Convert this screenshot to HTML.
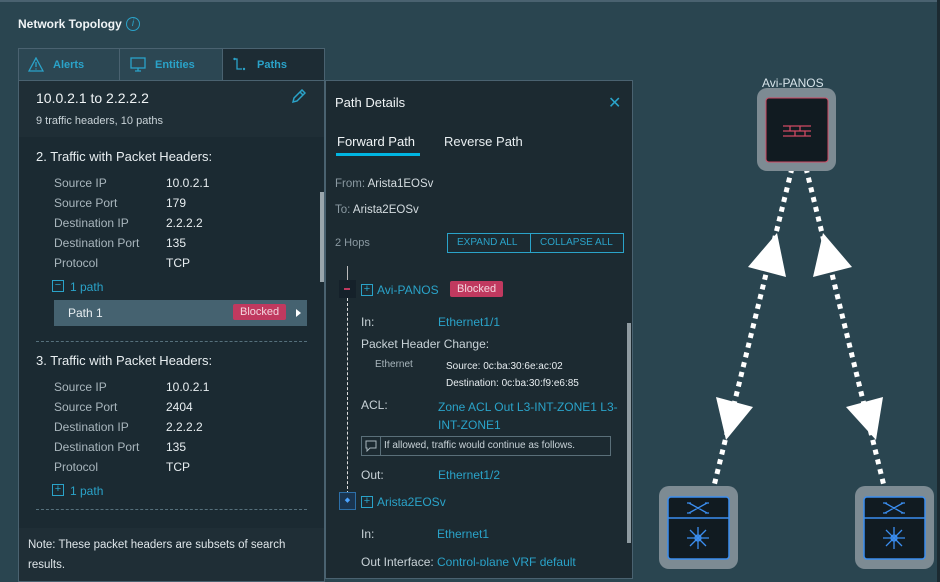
<!DOCTYPE html>
<html><head><meta charset="utf-8"><style>
*{margin:0;padding:0;box-sizing:border-box}
body{width:940px;height:582px;overflow:hidden;background:#2a4550;font-family:"Liberation Sans",sans-serif;position:relative;color:#e6ecef}
.a{position:absolute}
.lbl{color:#a9b6bd;font-size:12px}
.val{color:#e8eef1;font-size:12px}
.link{color:#2aa3c9;font-size:12px}
.blk{background:#c0395f;color:#f3d6df;font-size:11px;padding:2px 7px;border-radius:2px}
.pl{width:12px;height:12px;border:1px solid #2aa3c9;color:#2aa3c9;font-size:11px;line-height:9px;text-align:center}
</style></head><body>
<div class="a" style="left:0;top:0;width:940px;height:2px;background:#4a6270"></div>
<div class="a" style="left:937px;top:0;width:3px;height:582px;background:#1c2a31"></div>
<div class="a" style="left:18px;top:17px;font-size:12px;color:#f0f4f6;font-weight:bold">Network Topology</div>
<div class="a" style="left:126px;top:17px;width:14px;height:14px;border:1px solid #2aa3c9;border-radius:50%;color:#2aa3c9;font-size:10px;text-align:center;line-height:12px;font-style:italic">i</div>

<!-- left panel -->
<div class="a" style="left:18px;top:48px;width:307px;height:534px;background:#1b2a32;border:1px solid #4a6270"></div>
<div class="a" style="left:18px;top:48px;width:307px;height:33px;background:#2c4753;border:1px solid #4a6270"></div>
<div class="a" style="left:119px;top:48px;width:1px;height:33px;background:#4a6270"></div>
<div class="a" style="left:222px;top:48px;width:103px;height:33px;background:#1d2c34;border:1px solid #4a6270"></div>
<svg class="a" style="left:28px;top:57px" width="16" height="15"><path d="M8 1L15 14H1Z" fill="none" stroke="#2aa3c9" stroke-width="1.3"/><path d="M8 5v5M8 11.5v1" stroke="#2aa3c9" stroke-width="1.3"/></svg>
<div class="a" style="left:53px;top:59px;font-size:11px;color:#2aa3c9;font-weight:bold">Alerts</div>
<svg class="a" style="left:130px;top:57px" width="16" height="15"><rect x="1" y="1" width="14" height="10" fill="none" stroke="#2aa3c9" stroke-width="1.3"/><path d="M8 11v3M5 14h6" stroke="#2aa3c9" stroke-width="1.3"/></svg>
<div class="a" style="left:155px;top:59px;font-size:11px;color:#2aa3c9;font-weight:bold">Entities</div>
<svg class="a" style="left:233px;top:57px" width="14" height="14"><path d="M1 2h3v10h5" fill="none" stroke="#2aa3c9" stroke-width="1.3"/><circle cx="1.5" cy="2" r="1.2" fill="#2aa3c9"/><circle cx="11" cy="12" r="1.2" fill="#2aa3c9"/></svg>
<div class="a" style="left:257px;top:59px;font-size:11px;color:#2aa3c9;font-weight:bold">Paths</div>

<div class="a" style="left:19px;top:81px;width:305px;height:56px;background:#1f2e36"></div>
<div class="a" style="left:36px;top:90px;font-size:14px;color:#f0f4f6">10.0.2.1 to 2.2.2.2</div>
<svg class="a" style="left:290px;top:89px" width="16" height="16"><path d="M3 13l1-4 8-8 3 3-8 8z M10 3l3 3" fill="none" stroke="#2aa3c9" stroke-width="1.5"/></svg>
<div class="a" style="left:36px;top:115px;font-size:11px;color:#c9d3d8">9 traffic headers, 10 paths</div>

<div class="a" style="left:320px;top:192px;width:4px;height:90px;background:#9aa6ac"></div>

<div class="a" style="left:36px;top:149px;font-size:13px;color:#e8eef1">2. Traffic with Packet Headers:</div>
<div class="a lbl" style="left:54px;top:173px;line-height:20px">Source IP<br>Source Port<br>Destination IP<br>Destination Port<br>Protocol</div>
<div class="a val" style="left:166px;top:173px;line-height:20px">10.0.2.1<br>179<br>2.2.2.2<br>135<br>TCP</div>
<div class="a pl" style="left:52px;top:280px">−</div>
<div class="a link" style="left:70px;top:280px">1 path</div>
<div class="a" style="left:54px;top:300px;width:253px;height:26px;background:#456270"></div>
<div class="a val" style="left:68px;top:306px">Path 1</div>
<div class="a blk" style="left:233px;top:304px">Blocked</div>
<div class="a" style="left:296px;top:309px;width:0;height:0;border-left:5px solid #fff;border-top:4px solid transparent;border-bottom:4px solid transparent"></div>
<div class="a" style="left:36px;top:341px;width:271px;border-top:1px dashed #56707c"></div>

<div class="a" style="left:36px;top:353px;font-size:13px;color:#e8eef1">3. Traffic with Packet Headers:</div>
<div class="a lbl" style="left:54px;top:377px;line-height:20px">Source IP<br>Source Port<br>Destination IP<br>Destination Port<br>Protocol</div>
<div class="a val" style="left:166px;top:377px;line-height:20px">10.0.2.1<br>2404<br>2.2.2.2<br>135<br>TCP</div>
<div class="a pl" style="left:52px;top:484px">+</div>
<div class="a link" style="left:70px;top:484px">1 path</div>
<div class="a" style="left:36px;top:509px;width:271px;border-top:1px dashed #56707c"></div>
<div class="a" style="left:19px;top:528px;width:305px;height:53px;background:#1f2e36"></div>
<div class="a" style="left:28px;top:535px;font-size:11.5px;color:#dfe6ea;line-height:20px;width:290px">Note: These packet headers are subsets of search results.</div>

<!-- path details -->
<div class="a" style="left:325px;top:80px;width:308px;height:499px;background:#1c2a31;border:1px solid #4a6270"></div>
<div class="a" style="left:335px;top:95px;font-size:13px;color:#f0f4f6">Path Details</div>
<div class="a" style="left:608px;top:93px;font-size:16px;color:#2aa3c9">✕</div>
<div class="a" style="left:337px;top:134px;font-size:13px;color:#f0f4f6">Forward Path</div>
<div class="a" style="left:336px;top:153px;width:84px;height:3px;background:#00b5e2"></div>
<div class="a" style="left:444px;top:134px;font-size:13px;color:#e8eef1">Reverse Path</div>
<div class="a" style="left:335px;top:178px;font-size:11.5px;color:#8b9aa2">From: <span style="color:#d5dde1">Arista1EOSv</span></div>
<div class="a" style="left:335px;top:204px;font-size:11.5px;color:#8b9aa2">To: <span style="color:#d5dde1">Arista2EOSv</span></div>
<div class="a" style="left:335px;top:237px;font-size:11px;color:#8b9aa2">2 Hops</div>
<div class="a" style="left:447px;top:233px;width:177px;height:20px;border:1px solid #2aa3c9"></div>
<div class="a" style="left:530px;top:233px;width:1px;height:20px;background:#2aa3c9"></div>
<div class="a" style="left:457px;top:237px;font-size:10px;color:#2aa3c9">EXPAND ALL</div>
<div class="a" style="left:540px;top:237px;font-size:10px;color:#2aa3c9">COLLAPSE ALL</div>
<div class="a" style="left:627px;top:323px;width:4px;height:220px;background:#8f9ba1"></div>

<div class="a" style="left:347px;top:266px;width:1px;height:14px;background:#bbb"></div>
<div class="a" style="left:347px;top:298px;height:196px;border-left:1px dashed #ddd"></div>
<div class="a" style="left:339px;top:280px;width:17px;height:18px;background:#15212a"></div>
<div class="a" style="left:344px;top:288px;width:6px;height:2px;background:#c0395f"></div>
<div class="a pl" style="left:361px;top:284px">+</div>
<div class="a link" style="left:377px;top:283px;font-size:12px">Avi-PANOS</div>
<div class="a blk" style="left:450px;top:281px">Blocked</div>
<div class="a lbl" style="left:361px;top:315px;color:#c9d3d8">In:</div>
<div class="a link" style="left:438px;top:315px">Ethernet1/1</div>
<div class="a" style="left:361px;top:337px;font-size:12px;color:#c9d3d8">Packet Header Change:</div>
<div class="a" style="left:375px;top:359px;font-size:10px;color:#a9b6bd">Ethernet</div>
<div class="a" style="left:446px;top:358px;font-size:10px;color:#e8eef1;line-height:17px">Source: 0c:ba:30:6e:ac:02<br>Destination: 0c:ba:30:f9:e6:85</div>
<div class="a lbl" style="left:361px;top:398px;color:#c9d3d8">ACL:</div>
<div class="a link" style="left:438px;top:398px;line-height:18px;width:180px">Zone ACL Out L3-INT-ZONE1 L3-INT-ZONE1</div>
<div class="a" style="left:361px;top:436px;width:250px;height:20px;border:1px solid #5a6f79"></div>
<div class="a" style="left:380px;top:436px;width:1px;height:20px;background:#5a6f79"></div>
<svg class="a" style="left:365px;top:440px" width="12" height="12"><path d="M1 1h10v7H5l-3 3V8H1z" fill="none" stroke="#a9b6bd"/></svg>
<div class="a" style="left:384px;top:440px;font-size:10px;color:#c9d3d8">If allowed, traffic would continue as follows.</div>
<div class="a lbl" style="left:361px;top:468px;color:#c9d3d8">Out:</div>
<div class="a link" style="left:438px;top:468px">Ethernet1/2</div>
<div class="a" style="left:339px;top:492px;width:17px;height:18px;background:#1a3550;border:1px solid #2d6fa8"></div>
<div class="a" style="left:343px;top:498px;width:9px;height:6px;color:#4aa3ff;font-size:7px;line-height:6px;text-align:center">◆</div>
<div class="a pl" style="left:361px;top:496px">+</div>
<div class="a link" style="left:377px;top:495px;font-size:12px">Arista2EOSv</div>
<div class="a lbl" style="left:361px;top:527px;color:#c9d3d8">In:</div>
<div class="a link" style="left:437px;top:527px">Ethernet1</div>
<div class="a" style="left:326px;top:550px;width:300px;height:16px;overflow:hidden"><div style="position:absolute;left:35px;top:5px;font-size:12px;color:#c9d3d8">Out Interface:</div><div style="position:absolute;left:111px;top:5px;font-size:12px;color:#2aa3c9">Control-plane VRF default</div></div>

<!-- topology -->
<div class="a" style="left:762px;top:76px;font-size:12px;color:#d7e4ea">Avi-PANOS</div>
<svg class="a" style="left:634px;top:0" width="303" height="582" viewBox="634 0 303 582">
<g stroke="#fff" stroke-width="5" stroke-dasharray="5 5" fill="none">
<path d="M792 168L713 490"/><path d="M806 168L885 490"/>
</g>
<g fill="#fff">
<path d="M777 233L748 267L786 277Z"/><path d="M823 233L813 277L852 267Z"/>
<path d="M716 397L753 407L726 440Z"/><path d="M846 407L883 397L876 440Z"/>
</g>
<rect x="757" y="88" width="79" height="83" rx="10" fill="#7d8b93"/>
<rect x="766" y="98" width="62" height="64" rx="3" fill="#111b21" stroke="#d04a63" stroke-width="1"/>
<g stroke="#d04a63" stroke-width="1.3"><path d="M783 126h28M783 131h28M783 136h28M790 126v5M800 126v5M795 131v5M805 131v5"/></g>
<g id="sw">
<rect x="659" y="486" width="79" height="83" rx="10" fill="#7d8b93"/>
<rect x="668" y="497" width="61" height="62" rx="3" fill="#111b21" stroke="#3b8ef0" stroke-width="1.5"/>
<path d="M668 518h61" stroke="#3b8ef0" stroke-width="1.5"/>
<path d="M689 503l18 10M689 513l18-10M687 503h4M705 503h4M687 513h4M705 513h4" stroke="#3b8ef0" stroke-width="1.3"/>
<g stroke="#3b8ef0" stroke-width="1.3" fill="none"><circle cx="698" cy="538" r="3"/><path d="M698 527v22M687 538h22M690 530l16 16M706 530l-16 16"/></g>
</g>
<use href="#sw" x="196"/>
</svg>
</body></html>
